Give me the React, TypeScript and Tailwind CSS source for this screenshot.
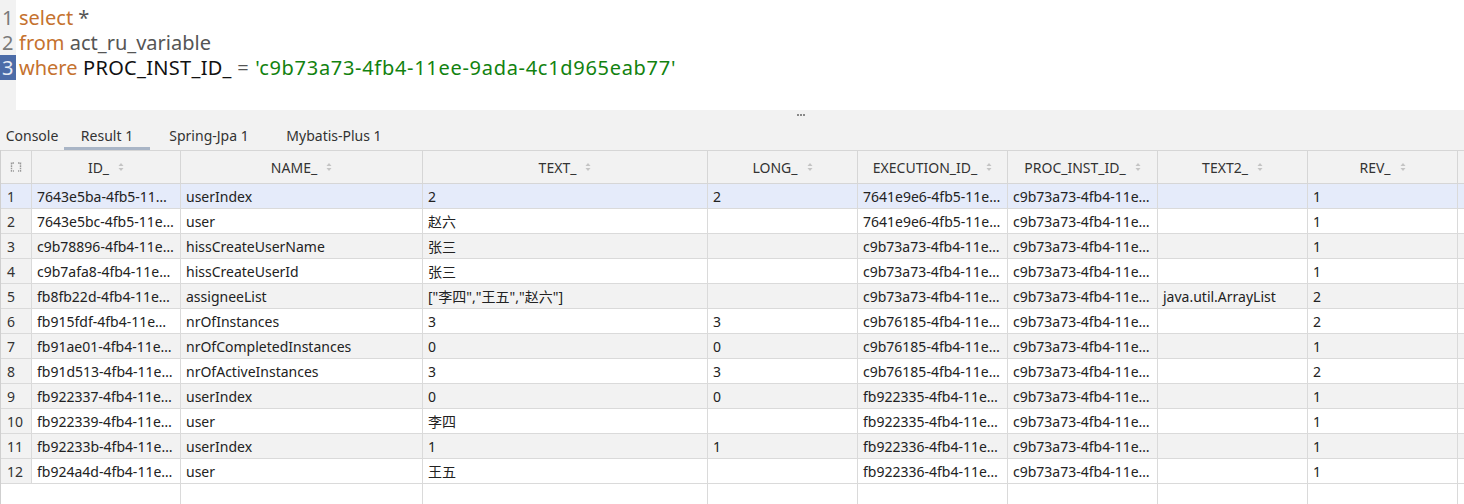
import React from 'react'

type Row = string[]

// column widths (px), last column fills the rest
const COLS = [
  { label: '', w: 'w-[31px]' },
  { label: 'ID_', w: 'w-[149px]' },
  { label: 'NAME_', w: 'w-[242px]' },
  { label: 'TEXT_', w: 'w-[285px]' },
  { label: 'LONG_', w: 'w-[150px]' },
  { label: 'EXECUTION_ID_', w: 'w-[150px]' },
  { label: 'PROC_INST_ID_', w: 'w-[150px]' },
  { label: 'TEXT2_', w: 'w-[150px]' },
  { label: 'REV_', w: 'w-[150px]' },
]

const PI = 'c9b73a73-4fb4-11e…'

const ROWS: Row[] = [
  ['1', '7643e5ba-4fb5-11…', 'userIndex', '2', '2', '7641e9e6-4fb5-11e…', PI, '', '1'],
  ['2', '7643e5bc-4fb5-11e…', 'user', '赵六', '', '7641e9e6-4fb5-11e…', PI, '', '1'],
  ['3', 'c9b78896-4fb4-11e…', 'hissCreateUserName', '张三', '', 'c9b73a73-4fb4-11e…', PI, '', '1'],
  ['4', 'c9b7afa8-4fb4-11e…', 'hissCreateUserId', '张三', '', 'c9b73a73-4fb4-11e…', PI, '', '1'],
  ['5', 'fb8fb22d-4fb4-11e…', 'assigneeList', '["李四","王五","赵六"]', '', 'c9b73a73-4fb4-11e…', PI, 'java.util.ArrayList', '2'],
  ['6', 'fb915fdf-4fb4-11e…', 'nrOfInstances', '3', '3', 'c9b76185-4fb4-11e…', PI, '', '2'],
  ['7', 'fb91ae01-4fb4-11e…', 'nrOfCompletedInstances', '0', '0', 'c9b76185-4fb4-11e…', PI, '', '1'],
  ['8', 'fb91d513-4fb4-11e…', 'nrOfActiveInstances', '3', '3', 'c9b76185-4fb4-11e…', PI, '', '2'],
  ['9', 'fb922337-4fb4-11e…', 'userIndex', '0', '0', 'fb922335-4fb4-11e…', PI, '', '1'],
  ['10', 'fb922339-4fb4-11e…', 'user', '李四', '', 'fb922335-4fb4-11e…', PI, '', '1'],
  ['11', 'fb92233b-4fb4-11e…', 'userIndex', '1', '1', 'fb922336-4fb4-11e…', PI, '', '1'],
  ['12', 'fb924a4d-4fb4-11e…', 'user', '王五', '', 'fb922336-4fb4-11e…', PI, '', '1'],
]

const TABS = [
  { label: 'Console', w: 'w-[64px]', active: false },
  { label: 'Result 1', w: 'w-[86px]', active: true },
  { label: 'Spring-Jpa 1', w: 'w-[118px]', active: false },
  { label: 'Mybatis-Plus 1', w: 'w-[132px]', active: false },
]

function SortIcon() {
  return (
    <svg width="6" height="10" viewBox="0 0 6 10" className="shrink-0">
      <path d="M3 1 L5.5 4 L0.5 4 Z" fill="#c4c4c4" />
      <path d="M3 9 L5.5 6 L0.5 6 Z" fill="#c4c4c4" />
    </svg>
  )
}

function SelectAllIcon() {
  return (
    <svg width="12" height="10" viewBox="0 0 12 10">
      <path d="M4 1 H1.5 V9 H4" fill="none" stroke="#9a9a9a" strokeWidth="1.4" strokeDasharray="1.6 0.8" />
      <path d="M8 1 H10.5 V9 H8" fill="none" stroke="#9a9a9a" strokeWidth="1.4" strokeDasharray="1.6 0.8" />
    </svg>
  )
}

export default function App() {
  return (
    <div
      className="h-[504px] w-[1464px] overflow-hidden flex flex-col bg-[#f2f2f2] text-[#222]"
      style={{ fontFamily: '"Noto Sans", "Noto Sans CJK SC", sans-serif' }}
    >
      {/* SQL editor */}
      <div className="h-[110px] flex shrink-0">
        <div className="w-[16px] bg-[#f2f2f2] pt-[5px] text-[20px] leading-[25px] text-[#7a7a7a]">
          <div className="pl-[2px]">1</div>
          <div className="pl-[2px]">2</div>
          <div className="pl-[2px] bg-[#4c6ca8] text-[#e8ecf5]">3</div>
        </div>
        <div className="flex-1 bg-white pt-[5px] pl-[3px] text-[20px] leading-[25px] whitespace-pre">
          <div>
            <span className="text-[#c5722f]">select</span>
            <span className="text-[#555]"> *</span>
          </div>
          <div>
            <span className="text-[#c5722f]">from</span>
            <span className="text-[#555]"> act_ru_variable</span>
          </div>
          <div>
            <span className="text-[#c5722f]">where</span>
            <span className="text-[#111] tracking-[0.3px]"> PROC_INST_ID_ </span>
            <span className="text-[#555] tracking-[0.6px]">= </span>
            <span className="text-[#12820f] tracking-[0.7px]">'c9b73a73-4fb4-11ee-9ada-4c1d965eab77'</span>
          </div>
        </div>
      </div>

      {/* splitter + result tabs */}
      <div className="h-[40px] shrink-0 flex flex-col">
        <div className="h-[10px] flex justify-start pl-[797px] pt-[4px] gap-[1px]">
          <span className="w-[2px] h-[2px] bg-[#666] rounded-full" />
          <span className="w-[2px] h-[2px] bg-[#666] rounded-full" />
          <span className="w-[2px] h-[2px] bg-[#666] rounded-full" />
        </div>
        <div className="h-[30px] flex">
          {TABS.map(t => (
            <div
              key={t.label}
              className={`${t.w} flex items-center justify-center text-[14px] text-[#333] pt-[3px] border-b-[3px] ${
                t.active ? 'border-[#a9b5c6]' : 'border-transparent'
              }`}
            >
              {t.label}
            </div>
          ))}
        </div>
      </div>

      {/* result grid */}
      <div className="flex-1 flex flex-col border-l border-[#cfcfcf] bg-white text-[14px]">
        <div className="h-[34px] flex shrink-0 bg-[#f2f2f2] border-y border-[#d6d6d6]">
          {COLS.map((c, i) => (
            <div
              key={i}
              className={`${c.w} shrink-0 border-r border-[#d6d6d6] flex items-center justify-center gap-[9px] text-[#333]`}
            >
              {i === 0 ? <SelectAllIcon /> : (
                <>
                  <span>{c.label}</span>
                  <SortIcon />
                </>
              )}
            </div>
          ))}
          <div className="flex-1" />
        </div>

        {ROWS.map((r, ri) => {
          const selected = ri === 0
          const rowBg = selected ? 'bg-[#e5ebfa]' : ri % 2 === 0 ? 'bg-[#f2f2f2]' : 'bg-white'
          return (
            <div key={ri} className={`h-[25px] flex shrink-0 border-b border-[#dadada] ${rowBg}`}>
              {COLS.map((c, ci) => (
                <div
                  key={ci}
                  className={`${c.w} shrink-0 border-r border-[#dadada] flex items-center overflow-hidden whitespace-nowrap ${
                    ci === 0 ? `pl-[6px] text-[#333] ${selected ? 'bg-[#e5ebfa]' : 'bg-[#f2f2f2]'}` : 'pl-[5px]'
                  }`}
                >
                  {r[ci]}
                </div>
              ))}
              <div className="flex-1" />
            </div>
          )
        })}

        {/* empty space below the last row */}
        <div className="flex-1 flex bg-white">
          <div className="w-[180px] shrink-0 border-r border-[#dadada]" />
          {COLS.slice(2).map((c, i) => (
            <div key={i} className={`${c.w} shrink-0 border-r border-[#dadada]`} />
          ))}
          <div className="flex-1" />
        </div>
      </div>
    </div>
  )
}
